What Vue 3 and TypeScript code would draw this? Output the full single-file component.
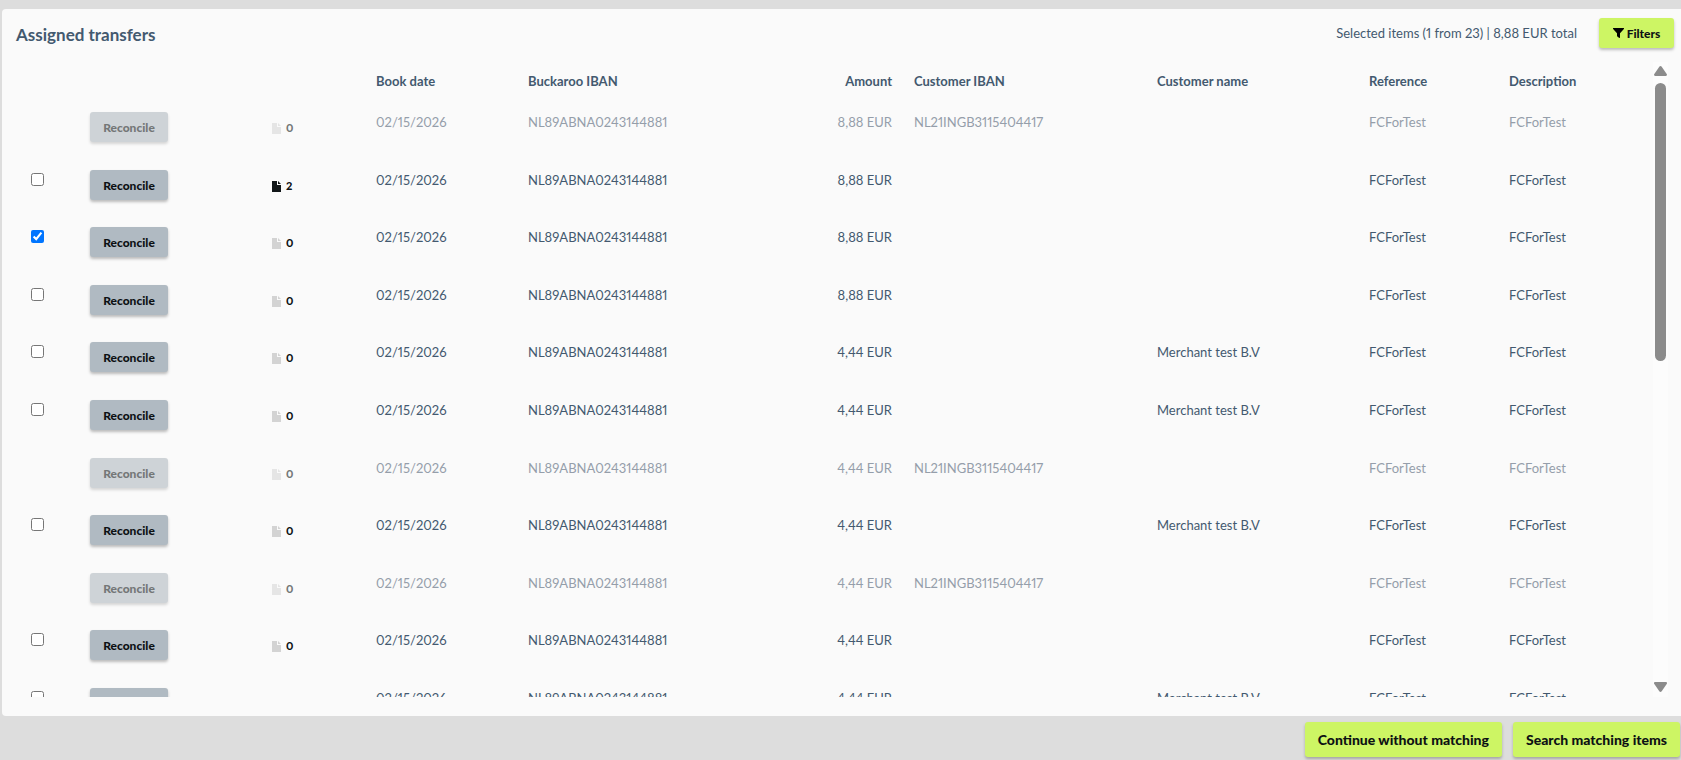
<script setup lang="ts">
import { ref } from 'vue'

interface Transfer {
  id: number
  amount: string
  files: number
  customerIban: string
  customerName: string
  locked: boolean
  selected: boolean
}

const make = (id: number, amount: string, extra: Partial<Transfer> = {}): Transfer => ({
  id,
  amount,
  files: 0,
  customerIban: '',
  customerName: '',
  locked: false,
  selected: false,
  ...extra,
})

const iban = 'NL21INGB3115404417'
const merchant = 'Merchant test B.V'

const transfers = ref<Transfer[]>([
  make(1, '8,88 EUR', { locked: true, customerIban: iban }),
  make(2, '8,88 EUR', { files: 2 }),
  make(3, '8,88 EUR', { selected: true }),
  make(4, '8,88 EUR'),
  make(5, '4,44 EUR', { customerName: merchant }),
  make(6, '4,44 EUR', { customerName: merchant }),
  make(7, '4,44 EUR', { locked: true, customerIban: iban }),
  make(8, '4,44 EUR', { customerName: merchant }),
  make(9, '4,44 EUR', { locked: true, customerIban: iban }),
  make(10, '4,44 EUR'),
  make(11, '4,44 EUR', { customerName: merchant }),
])
</script>

<template>
  <div class="page">
    <main class="panel">
      <header class="panel-head">
        <h1>Assigned transfers</h1>
        <p class="summary">Selected items (1 from 23) | 8,88 EUR total</p>
        <button type="button" class="btn filters">
          <svg width="11" height="10" viewBox="0 0 11 10" aria-hidden="true">
            <path d="M.5 0h10c.5 0 .7.5.4.9L7 5.300V9.500c0 .4-.4.6-.7.400L4.300 8.400A.8.8 0 0 1 4 7.800V5.300L.1.900C-.2.500 0 0 .5 0Z" />
          </svg>
          Filters
        </button>
      </header>

      <div class="body">
        <div class="list">
          <table>
            <colgroup>
              <col class="c-check" />
              <col class="c-action" />
              <col class="c-files" />
              <col class="c-date" />
              <col class="c-iban" />
              <col class="c-amount" />
              <col class="c-ciban" />
              <col class="c-name" />
              <col class="c-ref" />
              <col class="c-desc" />
            </colgroup>
            <thead>
              <tr>
                <td></td>
                <td></td>
                <td></td>
                <th scope="col">Book date</th>
                <th scope="col">Buckaroo IBAN</th>
                <th scope="col" class="amount">Amount</th>
                <th scope="col">Customer IBAN</th>
                <th scope="col">Customer name</th>
                <th scope="col">Reference</th>
                <th scope="col">Description</th>
              </tr>
            </thead>
            <tbody>
              <tr v-for="t in transfers" :key="t.id" :class="{ locked: t.locked }">
                <td>
                  <label v-if="!t.locked" class="check">
                    <input v-model="t.selected" type="checkbox" aria-label="Select transfer" />
                  </label>
                </td>
                <td>
                  <button type="button" class="btn reconcile" :disabled="t.locked">Reconcile</button>
                </td>
                <td>
                  <span class="files" :class="{ filled: t.files > 0 }">
                    <svg width="9" height="11" viewBox="0 0 9 11" aria-hidden="true">
                      <path d="M0 0h5v4h4v7H0ZM6 0l3 3H6Z" />
                    </svg>
                    {{ t.files }}
                  </span>
                </td>
                <td>02/15/2026</td>
                <td>NL89ABNA0243144881</td>
                <td class="amount">{{ t.amount }}</td>
                <td>{{ t.customerIban }}</td>
                <td>{{ t.customerName }}</td>
                <td>FCForTest</td>
                <td>FCForTest</td>
              </tr>
            </tbody>
          </table>
        </div>
        <div class="scrollbar" aria-hidden="true">
          <svg width="13" height="10" viewBox="0 0 13 10">
            <path d="M5.300.8a1.500 1.500 0 0 1 2.400 0l5 7.200c.6.900.2 2-.9 2H1.200C.1 10-.3 8.900.3 8Z" />
          </svg>
          <div class="track"><div class="thumb"></div></div>
          <svg width="13" height="10" viewBox="0 0 13 10">
            <path d="M5.300 9.200a1.500 1.500 0 0 0 2.400 0l5-7.200c.6-.9.2-2-.9-2H1.200C.1 0-.3 1.100.3 2Z" />
          </svg>
        </div>
      </div>
    </main>

    <footer class="actions">
      <button type="button" class="btn primary">Continue without matching</button>
      <button type="button" class="btn primary">Search matching items</button>
    </footer>
  </div>
</template>

<style>
body {
  background: #dddddd;
}
</style>

<style scoped>
.page {
  box-sizing: border-box;
  display: flex;
  flex-direction: column;
  height: 100vh;
  padding: 9px 0 0 2px;
  overflow: hidden;
  background: #dddddd;
  color: #43596f;
  font: 13px/20px Lato, "Liberation Sans", sans-serif;
  font-variant-numeric: proportional-nums;
}
.panel {
  flex: 1;
  display: flex;
  flex-direction: column;
  min-height: 0;
  padding-bottom: 19px;
  box-sizing: border-box;
  background: #fafafa;
  border-radius: 4px 0 0 4px;
}
.panel-head {
  display: flex;
  align-items: flex-start;
  height: 53px;
  box-sizing: border-box;
  padding: 9px 7px 0 14px;
}
h1 {
  flex: 1;
  margin: 0;
  font-size: 17px;
  line-height: 34px;
  font-weight: 700;
}
.summary {
  margin: 0 22px 0 0;
  font-size: 13px;
  line-height: 30px;
}
.btn {
  border: 0;
  border-radius: 3px;
  font-family: inherit;
  font-weight: 900;
  color: #0d1114;
  box-shadow: 0 2px 3px rgba(0, 0, 0, 0.25);
  cursor: pointer;
}
.filters {
  display: flex;
  align-items: center;
  justify-content: center;
  gap: 3px;
  width: 75px;
  height: 30px;
  padding: 0;
  background: #cdf564;
  font-size: 12px;
}
.body {
  flex: 1;
  display: flex;
  min-height: 0;
  padding: 0 13px 0 18px;
}
.list {
  flex: 1;
  overflow-y: auto;
  scrollbar-width: none;
}
table {
  width: 100%;
  table-layout: fixed;
  border-collapse: collapse;
}
.c-check { width: 59px; }
.c-action { width: 182px; }
.c-files { width: 104px; }
.c-date { width: 152px; }
.c-iban { width: 243px; }
.c-amount { width: 143px; }
.c-ciban { width: 243px; }
.c-name { width: 212px; }
.c-ref { width: 140px; }
.c-desc { width: 155px; }
th {
  height: 39px;
  box-sizing: border-box;
  padding: 0 11px 2px;
  text-align: left;
  font-weight: 700;
}
tbody td {
  height: 58px;
  box-sizing: border-box;
  padding: 11px 11px 0;
  vertical-align: top;
  white-space: nowrap;
}
tbody tr:nth-child(5n + 2) td,
tbody tr:nth-child(5n + 4) td {
  height: 57px;
}
.amount {
  text-align: right;
}
.check {
  display: flex;
  align-items: center;
  height: 18px;
}
.check input {
  width: 13px;
  height: 13px;
  margin: 0;
}
.reconcile {
  display: block;
  width: 78px;
  height: 30px;
  padding: 0;
  background: #b0bac2;
  font-size: 12px;
}
.files {
  display: flex;
  align-items: center;
  gap: 5px;
  height: 32px;
  color: #0d1114;
  font-size: 11px;
  font-weight: 900;
}
.files svg {
  fill: #d3d3d3;
}
.files.filled svg {
  fill: #111618;
}
.locked td {
  color: #959eaa;
}
.locked .reconcile {
  background: #ced3d7;
  color: #747777;
  box-shadow: 0 2px 3px rgba(0, 0, 0, 0.15);
  cursor: default;
}
.locked .files {
  color: #747777;
}
.locked .files svg {
  fill: #e5e5e5;
}
.scrollbar {
  display: flex;
  flex-direction: column;
  align-items: center;
  width: 15px;
  box-sizing: border-box;
  padding: 4px 0 5px;
  background: #fcfcfc;
}
.scrollbar svg {
  flex: none;
  fill: #8b8b8b;
}
.track {
  flex: 1;
  width: 11px;
  padding: 7px 0;
}
.thumb {
  height: 47%;
  border-radius: 6px;
  background: #8b8b8b;
}
.actions {
  display: flex;
  justify-content: flex-end;
  gap: 11px;
  height: 44px;
  box-sizing: border-box;
  padding: 6px 1px 0 0;
}
.primary {
  height: 35px;
  padding: 0 13px;
  background: #cdf564;
  font-size: 14px;
}
</style>
